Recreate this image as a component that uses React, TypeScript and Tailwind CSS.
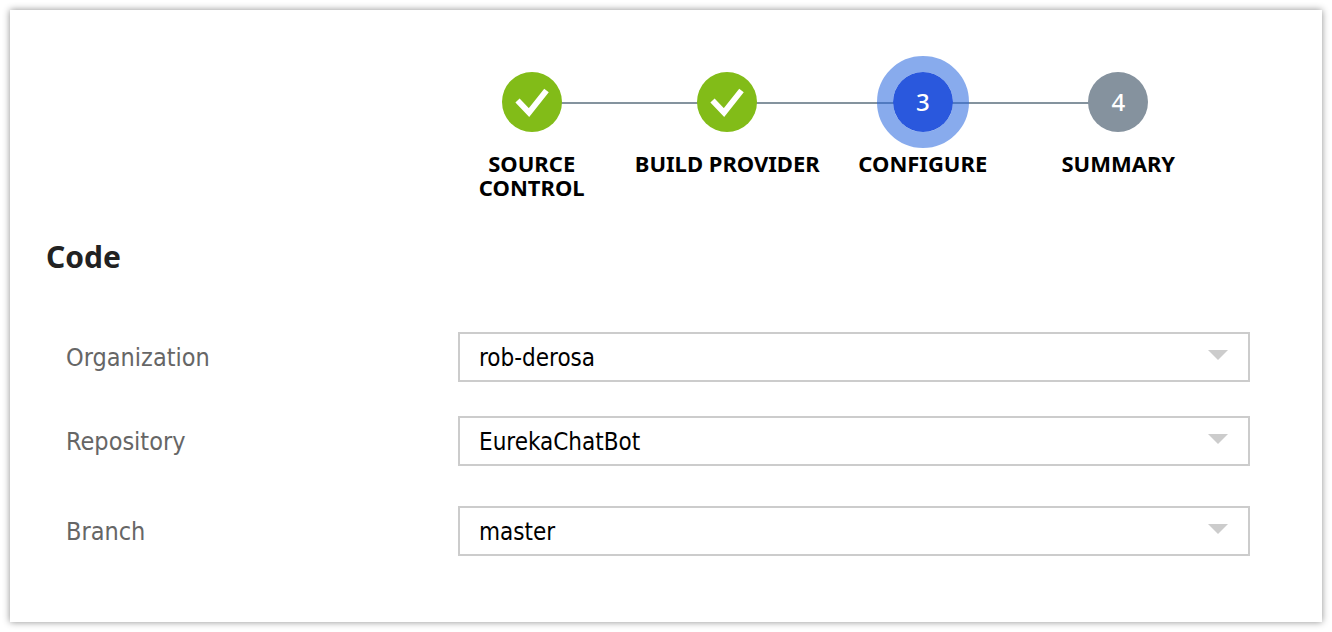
type StepState = 'done' | 'current' | 'pending';

const steps: { label: string; state: StepState }[] = [
  { label: 'Source Control', state: 'done' },
  { label: 'Build Provider', state: 'done' },
  { label: 'Configure', state: 'current' },
  { label: 'Summary', state: 'pending' },
];

const fields = [
  { id: 'organization', label: 'Organization', value: 'rob-derosa', spacing: '' },
  { id: 'repository', label: 'Repository', value: 'EurekaChatBot', spacing: 'mt-[34px]' },
  { id: 'branch', label: 'Branch', value: 'master', spacing: 'mt-10' },
];

const circleColors: Record<StepState, string> = {
  done: 'bg-[#82bc18]',
  current: 'bg-[#2a58dd]',
  pending: 'bg-[#85929e]',
};

function CheckMark() {
  return (
    <svg viewBox="0 0 60 60" className="size-full" aria-hidden="true">
      <path d="M15.5 28.5 27 40.5 44.5 18.5" fill="none" stroke="#fff" strokeWidth="5.8" />
    </svg>
  );
}

function Step({ index, label, state }: { index: number; label: string; state: StepState }) {
  return (
    <li className="relative flex flex-col items-center">
      {index > 0 && (
        <span className="absolute top-[30px] right-1/2 h-0.5 w-full bg-[#84939e]" />
      )}
      <span
        className={`relative z-10 flex size-[60px] items-center justify-center rounded-full font-['Noto_Sans',sans-serif] text-2xl font-medium text-white ${circleColors[state]}`}
      >
        {state === 'current' && (
          <span className="absolute -inset-4 rounded-full border-16 border-[#2666de]/55" />
        )}
        {state === 'done' ? <CheckMark /> : index + 1}
      </span>
      <span className="mt-[19px] px-10 text-center font-['Noto_Sans',sans-serif] text-[22px] leading-6 font-bold text-black uppercase">
        {index === 0 ? label : <span className="whitespace-nowrap">{label}</span>}
      </span>
    </li>
  );
}

function SelectField({ id, label, value, spacing }: (typeof fields)[number]) {
  return (
    <div className={`flex items-center ${spacing}`}>
      <label htmlFor={id} className="w-[392px] shrink-0 pt-0.5 text-[25px] leading-8 text-[#666]">
        {label}
      </label>
      <div className="relative flex-1">
        <select
          id={id}
          defaultValue={value}
          className="block h-[50px] w-full appearance-none rounded-none border-2 border-[#ccc] bg-white pt-0.5 pr-12 pl-[19px] text-2xl text-black"
        >
          <option>{value}</option>
        </select>
        <svg
          viewBox="0 0 20 10"
          className="pointer-events-none absolute top-[18px] right-[22px] h-2.5 w-5 fill-[#ccc]"
          aria-hidden="true"
        >
          <path d="M0 0H20L10 10Z" />
        </svg>
      </div>
    </div>
  );
}

export default function App() {
  return (
    <div className="bg-white p-2.5 font-['DejaVu_Sans_Condensed','DejaVu_Sans',sans-serif]">
      <main className="bg-white pt-[62px] pb-[66px] shadow-[0_0_7px_rgba(0,0,0,0.45)]">
        <ol className="mr-[106px] ml-[424px] grid grid-cols-4">
          {steps.map((step, index) => (
            <Step key={step.label} index={index} {...step} />
          ))}
        </ol>
        <h1 className="mt-[38px] ml-9 font-['Noto_Sans',sans-serif] text-3xl leading-10 font-bold text-[#222]">
          Code
        </h1>
        <form className="mt-[55px] mr-[72px] ml-14">
          {fields.map((field) => (
            <SelectField key={field.id} {...field} />
          ))}
        </form>
      </main>
    </div>
  );
}
